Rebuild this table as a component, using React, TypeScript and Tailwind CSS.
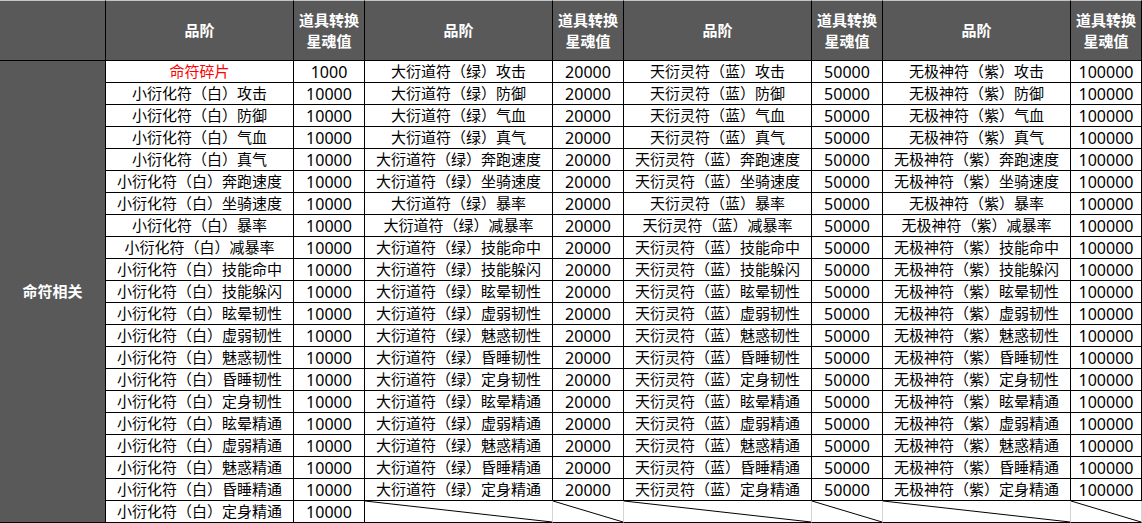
const attrs = [
  '攻击',
  '防御',
  '气血',
  '真气',
  '奔跑速度',
  '坐骑速度',
  '暴率',
  '减暴率',
  '技能命中',
  '技能躲闪',
  '眩晕韧性',
  '虚弱韧性',
  '魅惑韧性',
  '昏睡韧性',
  '定身韧性',
  '眩晕精通',
  '虚弱精通',
  '魅惑精通',
  '昏睡精通',
  '定身精通',
];

const tiers = [
  { prefix: '大衍道符（绿）', value: '20000' },
  { prefix: '天衍灵符（蓝）', value: '50000' },
  { prefix: '无极神符（紫）', value: '100000' },
];

const white = [
  { name: '命符碎片', value: '1000', red: true },
  ...attrs.map((a) => ({ name: `小衍化符（白）${a}`, value: '10000', red: false })),
];

function Head({ children }: { children?: React.ReactNode }) {
  return (
    <div className="flex items-center justify-center border-r border-b border-t border-r-black border-b-black border-t-[#c6c6c6] bg-[#595959] text-center text-[15px] leading-[21px] font-bold text-white">
      {children}
    </div>
  );
}

function Cell({ children, red }: { children: React.ReactNode; red?: boolean }) {
  return (
    <div
      className={`flex items-center justify-center whitespace-nowrap border-r border-b border-black bg-white text-[15px] leading-none ${
        red ? 'text-[#ff0000]' : 'text-black'
      }`}
    >
      {children}
    </div>
  );
}

function Num({ children }: { children: React.ReactNode }) {
  return (
    <div className="flex items-center justify-center border-r border-b border-black bg-white text-[16px] leading-none text-black">
      {children}
    </div>
  );
}

// empty cell in the last row, crossed by a diagonal hairline
function Slash() {
  return (
    <div className="relative border-r border-b border-r-[#d4d4d4] border-b-black bg-white">
      <svg className="absolute inset-0 h-full w-full" viewBox="0 0 100 100" preserveAspectRatio="none">
        <line x1="0" y1="0" x2="100" y2="100" stroke="#000" strokeWidth="1" vectorEffect="non-scaling-stroke" />
      </svg>
    </div>
  );
}

export default function App() {
  return (
    <div
      className="grid h-[523px] w-[1142px] grid-cols-[106px_188px_71px_188px_71px_188px_71px_188px_71px] grid-rows-[61px_repeat(21,22px)] overflow-hidden bg-white"
      style={{ fontFamily: '"Noto Sans", "Noto Sans CJK SC", sans-serif' }}
    >
      {/* header */}
      <Head />
      {[0, 1, 2, 3].map((i) => (
        <div key={i} className="contents">
          <Head>品阶</Head>
          <Head>
            道具转换
            <br />
            星魂值
          </Head>
        </div>
      ))}

      {/* group label */}
      <div className="row-span-21 flex items-center justify-center border-r border-b border-black bg-[#595959] text-[15px] font-bold text-white">
        命符相关
      </div>

      {white.map((w, r) => (
        <div key={r} className="contents">
          <Cell red={w.red}>{w.name}</Cell>
          <Num>{w.value}</Num>
          {tiers.map((t) =>
            r < attrs.length ? (
              <div key={t.prefix} className="contents">
                <Cell>{t.prefix + attrs[r]}</Cell>
                <Num>{t.value}</Num>
              </div>
            ) : (
              <div key={t.prefix} className="contents">
                <Slash />
                <Slash />
              </div>
            ),
          )}
        </div>
      ))}
    </div>
  );
}
